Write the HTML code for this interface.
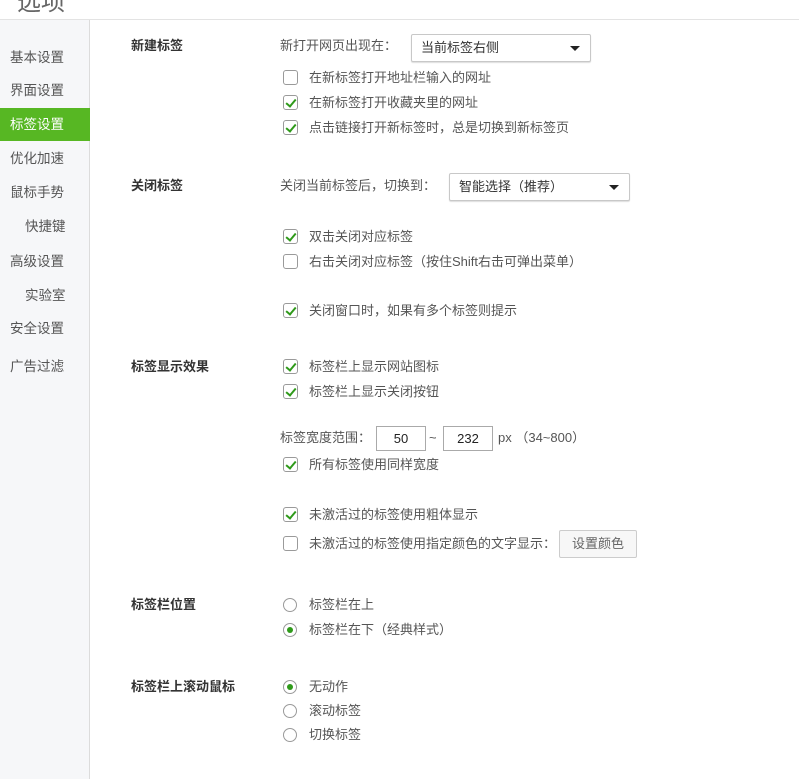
<!DOCTYPE html>
<html><head><meta charset="utf-8"><style>
*{margin:0;padding:0;box-sizing:border-box}
body{width:799px;height:779px;overflow:hidden;background:#fff;font-family:"Liberation Sans","Noto Sans CJK SC",sans-serif;font-size:13px;color:#555;position:relative}
.a{position:absolute;white-space:nowrap}
#title{left:17px;top:-18px;font-size:24px;color:#666}
#hdr{left:0;top:19px;width:799px;height:1px;background:#e3e3e3}
#side{left:0;top:20px;width:90px;height:759px;background:#f6f7f9;border-right:1px solid #dcdcdc}
.si{position:absolute;left:10px;font-size:13.5px;color:#555;line-height:20px}
#act{left:0;top:108px;width:90px;height:33px;background:#57b723}
.h{left:131px;font-weight:bold;color:#333;font-size:13px;line-height:20px}
.t{line-height:20px;font-size:13px;color:#555}
.cb{position:absolute;left:283px;width:15px;height:15px;border:1px solid #9a9a9a;border-radius:3px;background:#fff}
.cb.on::after{content:"";position:absolute;left:4px;top:1px;width:4px;height:8px;border:solid #2f9a1a;border-width:0 2.5px 2.5px 0;transform:rotate(40deg)}
.rd{position:absolute;left:283px;width:14px;height:14px;border:1px solid #9a9a9a;border-radius:50%;background:#fff}
.rd.on::after{content:"";position:absolute;left:3px;top:3px;width:6px;height:6px;border-radius:50%;background:#2f9a1a}
.sel{position:absolute;height:28px;border:1px solid #c8c8c8;border-radius:2px;background:#fff;box-shadow:0 1px 1px #ddd;padding-left:9px;line-height:26px;color:#333}
.sel::after{content:"";position:absolute;right:10px;top:11px;border:5px solid transparent;border-top:5px solid #222;border-bottom:0}
.inp{position:absolute;top:426px;width:50px;height:25px;border:1px solid #aaa;text-align:center;line-height:23px;color:#222}
</style></head><body>
<div class="a" id="title">选项</div>
<div class="a" id="hdr"></div>
<div class="a" id="side"></div>
<div class="a" id="act"></div>
<div class="si" style="top:48px">基本设置</div>
<div class="si" style="top:81px">界面设置</div>
<div class="si" style="top:115px;color:#fff">标签设置</div>
<div class="si" style="top:149px">优化加速</div>
<div class="si" style="top:183px">鼠标手势</div>
<div class="si" style="top:217px;left:25px">快捷键</div>
<div class="si" style="top:252px">高级设置</div>
<div class="si" style="top:286px;left:25px">实验室</div>
<div class="si" style="top:319px">安全设置</div>
<div class="si" style="top:357px">广告过滤</div>

<div class="a h" style="top:36px">新建标签</div>
<div class="a h" style="top:176px">关闭标签</div>
<div class="a h" style="top:357px">标签显示效果</div>
<div class="a h" style="top:595px">标签栏位置</div>
<div class="a h" style="top:677px">标签栏上滚动鼠标</div>

<div class="a t" style="left:280px;top:36px">新打开网页出现在：</div>
<div class="sel" style="left:411px;top:34px;width:180px">当前标签右侧</div>
<div class="cb" style="top:70px"></div><div class="a t" style="left:309px;top:68px">在新标签打开地址栏输入的网址</div>
<div class="cb on" style="top:95px"></div><div class="a t" style="left:309px;top:93px">在新标签打开收藏夹里的网址</div>
<div class="cb on" style="top:120px"></div><div class="a t" style="left:309px;top:118px">点击链接打开新标签时，总是切换到新标签页</div>

<div class="a t" style="left:280px;top:176px">关闭当前标签后，切换到：</div>
<div class="sel" style="left:449px;top:173px;width:181px">智能选择（推荐）</div>
<div class="cb on" style="top:229px"></div><div class="a t" style="left:309px;top:227px">双击关闭对应标签</div>
<div class="cb" style="top:254px"></div><div class="a t" style="left:309px;top:252px">右击关闭对应标签（按住Shift右击可弹出菜单）</div>
<div class="cb on" style="top:303px"></div><div class="a t" style="left:309px;top:301px">关闭窗口时，如果有多个标签则提示</div>

<div class="cb on" style="top:359px"></div><div class="a t" style="left:309px;top:357px">标签栏上显示网站图标</div>
<div class="cb on" style="top:384px"></div><div class="a t" style="left:309px;top:382px">标签栏上显示关闭按钮</div>
<div class="a t" style="left:280px;top:428px">标签宽度范围：</div>
<div class="inp" style="left:376px">50</div>
<div class="a t" style="left:429px;top:428px">~</div>
<div class="inp" style="left:443px">232</div>
<div class="a t" style="left:498px;top:428px">px （34~800）</div>
<div class="cb on" style="top:457px"></div><div class="a t" style="left:309px;top:455px">所有标签使用同样宽度</div>
<div class="cb on" style="top:507px"></div><div class="a t" style="left:309px;top:505px">未激活过的标签使用粗体显示</div>
<div class="cb" style="top:536px"></div><div class="a t" style="left:309px;top:534px">未激活过的标签使用指定颜色的文字显示：</div>
<div class="a" style="left:559px;top:530px;width:78px;height:28px;border:1px solid #ccc;border-radius:2px;background:#f7f7f7;text-align:center;line-height:26px;color:#666">设置颜色</div>

<div class="rd" style="top:598px"></div><div class="a t" style="left:309px;top:595px">标签栏在上</div>
<div class="rd on" style="top:623px"></div><div class="a t" style="left:309px;top:620px">标签栏在下（经典样式）</div>

<div class="rd on" style="top:680px"></div><div class="a t" style="left:309px;top:677px">无动作</div>
<div class="rd" style="top:704px"></div><div class="a t" style="left:309px;top:701px">滚动标签</div>
<div class="rd" style="top:728px"></div><div class="a t" style="left:309px;top:725px">切换标签</div>
</body></html>
